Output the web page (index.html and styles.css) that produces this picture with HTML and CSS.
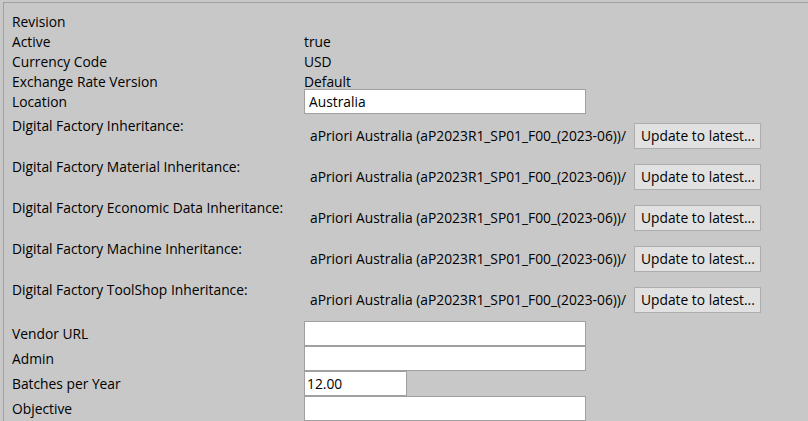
FILE: index.html
```html
<!DOCTYPE html>
<html lang="en">
<head>
  <meta charset="UTF-8">
  <title>Digital Factory Properties</title>
  <link rel="stylesheet" href="styles.css">
</head>
<body>

  <div class="panel">

    <div class="row"><span class="label">Revision</span><span class="value"></span></div>
    <div class="row"><span class="label">Active</span><span class="value">true</span></div>
    <div class="row"><span class="label">Currency Code</span><span class="value">USD</span></div>
    <div class="row"><span class="label">Exchange Rate Version</span><span class="value">Default</span></div>
    <div class="row row-field row-location">
      <span class="label">Location</span>
      <input class="field" type="text" value="Australia">
    </div>

    <div class="df-list">
      <div class="df-row">
        <span class="label">Digital Factory Inheritance:</span>
        <div class="df-value">
          <span class="df-name">aPriori Australia (aP2023R1_SP01_F00_(2023-06))/</span>
          <button class="btn">Update to latest...</button>
        </div>
      </div>
      <div class="df-row">
        <span class="label">Digital Factory Material Inheritance:</span>
        <div class="df-value">
          <span class="df-name">aPriori Australia (aP2023R1_SP01_F00_(2023-06))/</span>
          <button class="btn">Update to latest...</button>
        </div>
      </div>
      <div class="df-row">
        <span class="label">Digital Factory Economic Data Inheritance:</span>
        <div class="df-value">
          <span class="df-name">aPriori Australia (aP2023R1_SP01_F00_(2023-06))/</span>
          <button class="btn">Update to latest...</button>
        </div>
      </div>
      <div class="df-row">
        <span class="label">Digital Factory Machine Inheritance:</span>
        <div class="df-value">
          <span class="df-name">aPriori Australia (aP2023R1_SP01_F00_(2023-06))/</span>
          <button class="btn">Update to latest...</button>
        </div>
      </div>
      <div class="df-row">
        <span class="label">Digital Factory ToolShop Inheritance:</span>
        <div class="df-value">
          <span class="df-name">aPriori Australia (aP2023R1_SP01_F00_(2023-06))/</span>
          <button class="btn">Update to latest...</button>
        </div>
      </div>
    </div>

    <div class="field-list">
      <div class="row row-field">
        <span class="label">Vendor URL</span>
        <input class="field" type="text" value="">
      </div>
      <div class="row row-field">
        <span class="label">Admin</span>
        <input class="field" type="text" value="">
      </div>
      <div class="row row-field">
        <span class="label">Batches per Year</span>
        <input class="field field-short" type="text" value="12.00">
      </div>
      <div class="row row-field">
        <span class="label">Objective</span>
        <input class="field" type="text" value="">
      </div>
    </div>

  </div>

</body>
</html>
```

FILE: styles.css
```css
html, body {
  margin: 0;
  height: 100%;
  overflow: hidden;
}

body {
  background: #c8c8c8;
  color: #000;
  font-family: 'Open Sans', 'Noto Sans', sans-serif;
  font-size: 13.8px;
}

.panel {
  margin: 2px 0 0 3px;
  padding: 8px 0 0 8px;
  min-height: 100vh;
  border-top: 1px solid #a0a0a0;
  border-left: 1px solid #a0a0a0;
}

/* label column + value column */
.row {
  display: grid;
  grid-template-columns: 292px 1fr;
  align-items: center;
  height: 20px;
  white-space: nowrap;
}

.row-field {
  height: 25px;
}

/* the text field is taller than the label rows above it */
.row-location {
  margin-top: -2px;
}

.field {
  box-sizing: border-box;
  width: 282px;
  height: 25px;
  margin: 0;
  padding: 0 4px;
  border: 1px solid #a0a0a0;
  background: #fff;
  color: #000;
  font: inherit;
  outline: none;
}

.field-short {
  width: 103px;
  padding-left: 2px;
}

.df-list {
  padding-top: 1px;
}

.df-row {
  display: grid;
  grid-template-columns: 292px 1fr;
  height: 41px;
  white-space: nowrap;
}

.df-row .label {
  align-self: start;
  padding-top: 1px;
  line-height: 20px;
}

.df-value {
  display: flex;
  align-items: center;
}

.df-name {
  box-sizing: border-box;
  width: 330px;
  padding-left: 6px;
}

.btn {
  box-sizing: border-box;
  width: 127px;
  height: 26px;
  padding: 0 0 0 6px;
  border: 1px solid #adadad;
  background: #e1e1e1;
  color: #000;
  font: inherit;
  text-align: left;
}

.field-list {
  padding-top: 1px;
}
```
